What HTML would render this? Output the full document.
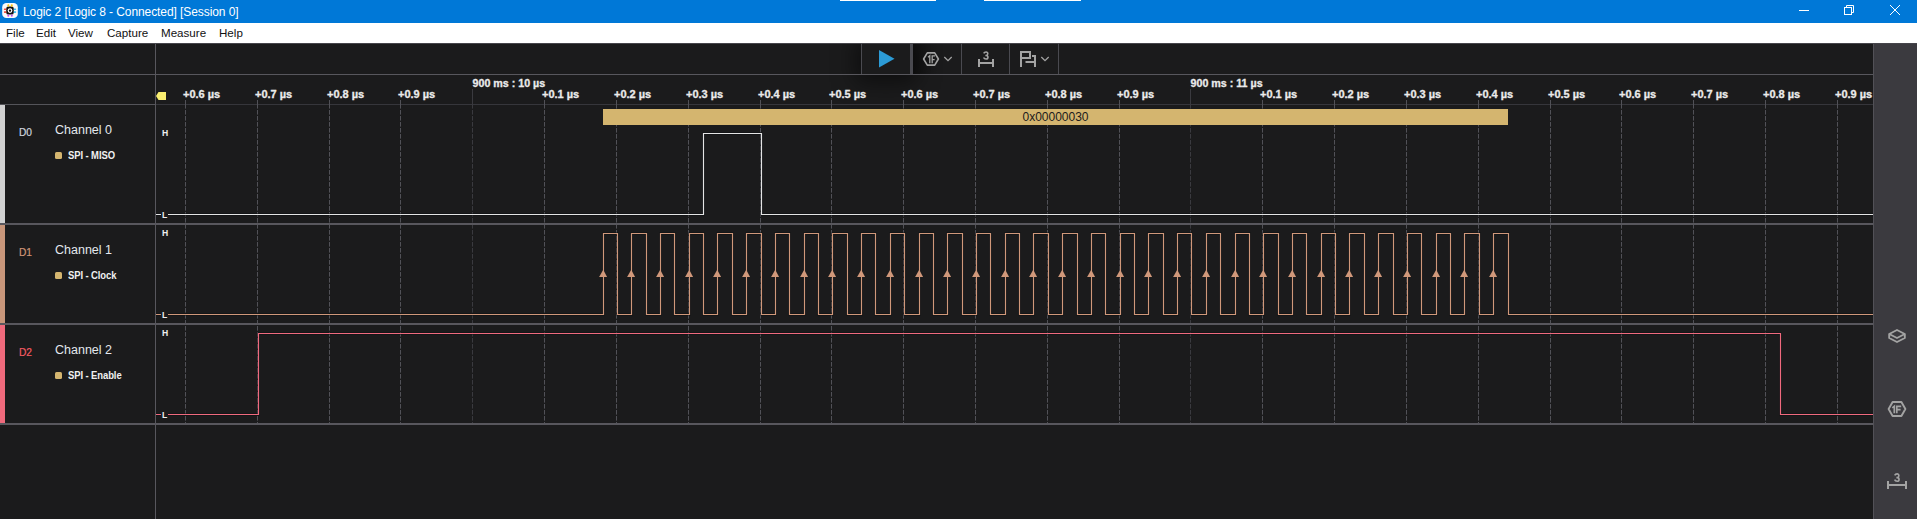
<!DOCTYPE html>
<html><head><meta charset="utf-8"><style>
*{margin:0;padding:0;box-sizing:border-box}
html,body{width:1917px;height:519px;overflow:hidden;background:#1b1b1c;font-family:"Liberation Sans",sans-serif}
.abs{position:absolute}
#title{position:absolute;left:0;top:0;width:1917px;height:23px;background:#0078d7}
#title .t{position:absolute;left:23px;top:5px;color:#fff;font-size:12px;line-height:14px;letter-spacing:-0.08px;white-space:nowrap}
#menu{position:absolute;left:0;top:23px;width:1917px;height:20px;background:#fff}
#menu span{position:absolute;top:3.3px;font-size:11.6px;line-height:14px;color:#111}
#sidebar{position:absolute;left:1873px;top:43px;width:44px;height:476px;background:#3b3a3f;border-left:1px solid #525157}
.vline{position:absolute;left:155px;top:43px;width:1px;height:476px;background:#58575d}
.hline{position:absolute;left:0;width:1873px;height:1px;background:#58575d}
.sep{position:absolute;left:0;width:1873px;height:2px;background:#58575d}
.rl{position:absolute;top:88px;font-size:11px;font-weight:bold;color:#ebebeb;line-height:12px;white-space:nowrap;-webkit-text-stroke:0.3px #ebebeb}
.rm{position:absolute;top:76.5px;font-size:10.7px;font-weight:bold;color:#ebebeb;line-height:12px;white-space:nowrap;-webkit-text-stroke:0.3px #ebebeb}
.cbar{position:absolute;left:0;width:5px}
.dlab{position:absolute;left:19px;font-size:10.2px;line-height:11px;letter-spacing:-0.1px;-webkit-text-stroke:0.2px currentColor}
.cname{position:absolute;left:55px;font-size:12.5px;line-height:14px;color:#e4e8ee}
.sq{position:absolute;left:55px;width:7px;height:7px;border-radius:1.5px;background:#d4b56f}
.an{position:absolute;left:68px;font-size:10.4px;font-weight:bold;line-height:12px;color:#f0f0f0;letter-spacing:-0.1px;white-space:nowrap;transform:scaleX(0.91);transform-origin:0 0}
.hl{position:absolute;left:161px;font-size:8.6px;font-weight:bold;line-height:9px;color:#eee;background:#1b1b1c;padding:0 0.5px 0 1px}
.tsep{position:absolute;top:43px;width:1px;height:31px;background:#4a4a50}
</style></head><body>
<div id="title">
 <svg class="abs" style="left:0;top:0" width="24" height="23" viewBox="0 0 24 23">
  <rect x="2.2" y="3.1" width="15.6" height="15" rx="4.2" fill="#fafafa"/>
  <rect x="6.2" y="6.6" width="7.6" height="8" rx="2.2" fill="#111"/>
  <circle cx="10" cy="10.6" r="1.8" fill="none" stroke="#fff" stroke-width="1.2"/>
  <rect x="7.3" y="4.2" width="2" height="2.6" rx="1" fill="#f5c518"/><rect x="10.8" y="4.2" width="2" height="2.6" rx="1" fill="#f5c518"/>
  <rect x="3.8" y="8.4" width="2.6" height="1.6" rx="0.8" fill="#f04030"/><rect x="3.8" y="11.3" width="2.6" height="1.6" rx="0.8" fill="#f04030"/>
  <rect x="13.6" y="8.4" width="2.6" height="1.6" rx="0.8" fill="#30b8f0"/><rect x="13.6" y="11.3" width="2.6" height="1.6" rx="0.8" fill="#30b8f0"/>
  <rect x="7.3" y="14.4" width="2" height="2.4" rx="1" fill="#c050f0"/><rect x="10.8" y="14.4" width="2" height="2.4" rx="1" fill="#c050f0"/>
 </svg>
 <div class="t">Logic 2 [Logic 8 - Connected] [Session 0]</div>
 <div class="abs" style="left:840px;top:0;width:96px;height:1px;background:#fff"></div>
 <div class="abs" style="left:984px;top:0;width:97px;height:1px;background:#fff"></div>
 <svg class="abs" style="left:1790px;top:0" width="127" height="23" viewBox="1790 0 127 23">
  <line x1="1799" y1="10.5" x2="1809" y2="10.5" stroke="#fff" stroke-width="1"/>
  <rect x="1844.5" y="7.5" width="7" height="7" fill="none" stroke="#fff" stroke-width="1"/>
  <path d="M1846.5,7.5 V5.5 H1853.5 V12.5 H1851.5" fill="none" stroke="#fff" stroke-width="1"/>
  <path d="M1890,5 L1900,15 M1900,5 L1890,15" stroke="#fff" stroke-width="1"/>
 </svg>
</div>
<div id="menu">
 <span style="left:6px">File</span><span style="left:36px">Edit</span><span style="left:68px">View</span><span style="left:107px">Capture</span><span style="left:161px">Measure</span><span style="left:219px">Help</span>
</div>
<div id="sidebar"></div>
<div class="abs" style="left:0;top:43px;width:1873px;height:476px;overflow:hidden"><div class="abs" style="left:862px;top:0;width:48px;height:31px;background:#1b1b1c;box-shadow:0 2px 22px 6px rgba(0,0,0,0.5)"></div></div>
<div class="abs" style="left:913px;top:43px;width:145px;height:31px;background:linear-gradient(90deg,rgba(0,0,0,0.35),rgba(0,0,0,0) 25px)"></div>
<div class="hline" style="top:74px"></div>
<div class="hline" style="top:104px;width:155px;background:#55555a"></div><div class="hline" style="top:104px;left:156px;width:1717px;background:#36363b"></div>
<div class="vline"></div>
<div class="abs" style="left:0;top:43px;width:1917px;height:1px;background:#46454b"></div>
<div class="tsep" style="left:861px"></div>
<div class="abs" style="left:910px;top:43px;width:3px;height:31px;background:#4a4a50"></div>
<div class="tsep" style="left:961px"></div>
<div class="tsep" style="left:1009px"></div>
<div class="tsep" style="left:1058px"></div>
<svg class="abs" style="left:860px;top:43px" width="200" height="31" viewBox="860 43 200 31">
 <path d="M879,50 L894.5,58.8 L879,67.5 Z" fill="#2c9bd6"/>
 <path d="M927.3,52.9 H934.7 L938.4,59 L934.7,65.1 H927.3 L923.6,59 Z" fill="none" stroke="#a3a3a3" stroke-width="1.6" stroke-linejoin="round"/>
 <path d="M928,57.2 L929.8,55.7 V63.3 M932.2,63.3 V55.8 H935 M932.2,59.6 H934.6" fill="none" stroke="#a3a3a3" stroke-width="1.3"/>
 <path d="M944.3,57 L948,60.6 L951.7,57" fill="none" stroke="#a3a3a3" stroke-width="1.3"/>
 <path d="M983.70,53.40 C984.40,52.00 985.75,52.00 986.05,52.00 C988.40,52.00 988.30,55.30 986.05,55.50 H985.35 M986.05,55.50 C988.60,55.50 988.60,59.00 986.05,59.00 C985.25,59.00 984.17,58.80 983.60,57.46" fill="none" stroke="#a3a3a3" stroke-width="1.6" stroke-linecap="butt"/>
 <path d="M979,59 V67 M993,59 V67 M979,63 H993" fill="none" stroke="#a3a3a3" stroke-width="2"/>
 <path d="M1021,67 V52 H1030 V58 H1021" fill="none" stroke="#a3a3a3" stroke-width="2"/>
 <path d="M1032,56 H1035 V67 M1025.5,62 H1035" fill="none" stroke="#a3a3a3" stroke-width="2"/>
 <path d="M1041.3,57 L1045,60.6 L1048.7,57" fill="none" stroke="#a3a3a3" stroke-width="1.3"/>
</svg>
<svg class="abs" style="left:156px;top:90px" width="12" height="12" viewBox="156 90 12 12">
 <path d="M156,96 L158.5,92 H166 V100 H158.5 Z" fill="#f9ee70"/>
</svg>
<div class="rl" style="left:183px">+0.6 µs</div><div class="rl" style="left:255px">+0.7 µs</div><div class="rl" style="left:327px">+0.8 µs</div><div class="rl" style="left:398px">+0.9 µs</div><div class="rl" style="left:542px">+0.1 µs</div><div class="rl" style="left:614px">+0.2 µs</div><div class="rl" style="left:686px">+0.3 µs</div><div class="rl" style="left:758px">+0.4 µs</div><div class="rl" style="left:829px">+0.5 µs</div><div class="rl" style="left:901px">+0.6 µs</div><div class="rl" style="left:973px">+0.7 µs</div><div class="rl" style="left:1045px">+0.8 µs</div><div class="rl" style="left:1117px">+0.9 µs</div><div class="rl" style="left:1260px">+0.1 µs</div><div class="rl" style="left:1332px">+0.2 µs</div><div class="rl" style="left:1404px">+0.3 µs</div><div class="rl" style="left:1476px">+0.4 µs</div><div class="rl" style="left:1548px">+0.5 µs</div><div class="rl" style="left:1619px">+0.6 µs</div><div class="rl" style="left:1691px">+0.7 µs</div><div class="rl" style="left:1763px">+0.8 µs</div><div class="rl" style="left:1835px">+0.9 µs</div>
<div class="rm" style="left:472.5px">900 ms : 10 µs</div><div class="rm" style="left:1190.5px">900 ms : 11 µs</div>
<svg class="abs" style="left:0;top:0" width="1873" height="519" viewBox="0 0 1873 519">
<line x1="185.5" y1="100" x2="185.5" y2="104" stroke="#515157" stroke-width="1"/>
<line x1="185.5" y1="104" x2="185.5" y2="423" stroke="#515157" stroke-width="1" stroke-dasharray="4.6 1.4"/>
<line x1="257.5" y1="100" x2="257.5" y2="104" stroke="#515157" stroke-width="1"/>
<line x1="257.5" y1="104" x2="257.5" y2="423" stroke="#515157" stroke-width="1" stroke-dasharray="4.6 1.4"/>
<line x1="329.5" y1="100" x2="329.5" y2="104" stroke="#515157" stroke-width="1"/>
<line x1="329.5" y1="104" x2="329.5" y2="423" stroke="#515157" stroke-width="1" stroke-dasharray="4.6 1.4"/>
<line x1="400.5" y1="100" x2="400.5" y2="104" stroke="#515157" stroke-width="1"/>
<line x1="400.5" y1="104" x2="400.5" y2="423" stroke="#515157" stroke-width="1" stroke-dasharray="4.6 1.4"/>
<line x1="472.5" y1="89" x2="472.5" y2="104" stroke="#3a3a3f" stroke-width="1"/>
<line x1="472.5" y1="104" x2="472.5" y2="423" stroke="#3a3a3f" stroke-width="1" stroke-dasharray="4.6 1.4"/>
<line x1="544.5" y1="100" x2="544.5" y2="104" stroke="#515157" stroke-width="1"/>
<line x1="544.5" y1="104" x2="544.5" y2="423" stroke="#515157" stroke-width="1" stroke-dasharray="4.6 1.4"/>
<line x1="616.5" y1="100" x2="616.5" y2="104" stroke="#515157" stroke-width="1"/>
<line x1="616.5" y1="104" x2="616.5" y2="423" stroke="#515157" stroke-width="1" stroke-dasharray="4.6 1.4"/>
<line x1="688.5" y1="100" x2="688.5" y2="104" stroke="#515157" stroke-width="1"/>
<line x1="688.5" y1="104" x2="688.5" y2="423" stroke="#515157" stroke-width="1" stroke-dasharray="4.6 1.4"/>
<line x1="760.5" y1="100" x2="760.5" y2="104" stroke="#515157" stroke-width="1"/>
<line x1="760.5" y1="104" x2="760.5" y2="423" stroke="#515157" stroke-width="1" stroke-dasharray="4.6 1.4"/>
<line x1="831.5" y1="100" x2="831.5" y2="104" stroke="#515157" stroke-width="1"/>
<line x1="831.5" y1="104" x2="831.5" y2="423" stroke="#515157" stroke-width="1" stroke-dasharray="4.6 1.4"/>
<line x1="903.5" y1="100" x2="903.5" y2="104" stroke="#515157" stroke-width="1"/>
<line x1="903.5" y1="104" x2="903.5" y2="423" stroke="#515157" stroke-width="1" stroke-dasharray="4.6 1.4"/>
<line x1="975.5" y1="100" x2="975.5" y2="104" stroke="#515157" stroke-width="1"/>
<line x1="975.5" y1="104" x2="975.5" y2="423" stroke="#515157" stroke-width="1" stroke-dasharray="4.6 1.4"/>
<line x1="1047.5" y1="100" x2="1047.5" y2="104" stroke="#515157" stroke-width="1"/>
<line x1="1047.5" y1="104" x2="1047.5" y2="423" stroke="#515157" stroke-width="1" stroke-dasharray="4.6 1.4"/>
<line x1="1119.5" y1="100" x2="1119.5" y2="104" stroke="#515157" stroke-width="1"/>
<line x1="1119.5" y1="104" x2="1119.5" y2="423" stroke="#515157" stroke-width="1" stroke-dasharray="4.6 1.4"/>
<line x1="1190.5" y1="89" x2="1190.5" y2="104" stroke="#3a3a3f" stroke-width="1"/>
<line x1="1190.5" y1="104" x2="1190.5" y2="423" stroke="#3a3a3f" stroke-width="1" stroke-dasharray="4.6 1.4"/>
<line x1="1262.5" y1="100" x2="1262.5" y2="104" stroke="#515157" stroke-width="1"/>
<line x1="1262.5" y1="104" x2="1262.5" y2="423" stroke="#515157" stroke-width="1" stroke-dasharray="4.6 1.4"/>
<line x1="1334.5" y1="100" x2="1334.5" y2="104" stroke="#515157" stroke-width="1"/>
<line x1="1334.5" y1="104" x2="1334.5" y2="423" stroke="#515157" stroke-width="1" stroke-dasharray="4.6 1.4"/>
<line x1="1406.5" y1="100" x2="1406.5" y2="104" stroke="#515157" stroke-width="1"/>
<line x1="1406.5" y1="104" x2="1406.5" y2="423" stroke="#515157" stroke-width="1" stroke-dasharray="4.6 1.4"/>
<line x1="1478.5" y1="100" x2="1478.5" y2="104" stroke="#515157" stroke-width="1"/>
<line x1="1478.5" y1="104" x2="1478.5" y2="423" stroke="#515157" stroke-width="1" stroke-dasharray="4.6 1.4"/>
<line x1="1550.5" y1="100" x2="1550.5" y2="104" stroke="#515157" stroke-width="1"/>
<line x1="1550.5" y1="104" x2="1550.5" y2="423" stroke="#515157" stroke-width="1" stroke-dasharray="4.6 1.4"/>
<line x1="1621.5" y1="100" x2="1621.5" y2="104" stroke="#515157" stroke-width="1"/>
<line x1="1621.5" y1="104" x2="1621.5" y2="423" stroke="#515157" stroke-width="1" stroke-dasharray="4.6 1.4"/>
<line x1="1693.5" y1="100" x2="1693.5" y2="104" stroke="#515157" stroke-width="1"/>
<line x1="1693.5" y1="104" x2="1693.5" y2="423" stroke="#515157" stroke-width="1" stroke-dasharray="4.6 1.4"/>
<line x1="1765.5" y1="100" x2="1765.5" y2="104" stroke="#515157" stroke-width="1"/>
<line x1="1765.5" y1="104" x2="1765.5" y2="423" stroke="#515157" stroke-width="1" stroke-dasharray="4.6 1.4"/>
<line x1="1837.5" y1="100" x2="1837.5" y2="104" stroke="#515157" stroke-width="1"/>
<line x1="1837.5" y1="104" x2="1837.5" y2="423" stroke="#515157" stroke-width="1" stroke-dasharray="4.6 1.4"/>
<rect x="603" y="109" width="905" height="16" fill="#d4b56f"/>
<text x="1055.5" y="121" text-anchor="middle" font-family="Liberation Sans" font-size="12" fill="#1b1b1c">0x00000030</text>
<path d="M156,214.5 H703.5 V133.5 H761.5 V214.5 H1873" fill="none" stroke="#0d1112" stroke-opacity="0.6" stroke-width="2.3"/>
<path d="M156,214.5 H703.5 V133.5 H761.5 V214.5 H1873" fill="none" stroke="#e4e4e4" stroke-width="1.15"/>
<path d="M156,314.5 H603.5 V233.5 H617.5 V314.5 H631.5 V233.5 H646.5 V314.5 H660.5 V233.5 H674.5 V314.5 H689.5 V233.5 H703.5 V314.5 H717.5 V233.5 H732.5 V314.5 H746.5 V233.5 H761.5 V314.5 H775.5 V233.5 H789.5 V314.5 H804.5 V233.5 H818.5 V314.5 H832.5 V233.5 H847.5 V314.5 H861.5 V233.5 H875.5 V314.5 H890.5 V233.5 H904.5 V314.5 H919.5 V233.5 H933.5 V314.5 H947.5 V233.5 H962.5 V314.5 H976.5 V233.5 H990.5 V314.5 H1005.5 V233.5 H1019.5 V314.5 H1033.5 V233.5 H1048.5 V314.5 H1062.5 V233.5 H1077.5 V314.5 H1091.5 V233.5 H1105.5 V314.5 H1120.5 V233.5 H1134.5 V314.5 H1148.5 V233.5 H1163.5 V314.5 H1177.5 V233.5 H1191.5 V314.5 H1206.5 V233.5 H1220.5 V314.5 H1235.5 V233.5 H1249.5 V314.5 H1263.5 V233.5 H1278.5 V314.5 H1292.5 V233.5 H1306.5 V314.5 H1321.5 V233.5 H1335.5 V314.5 H1349.5 V233.5 H1364.5 V314.5 H1378.5 V233.5 H1393.5 V314.5 H1407.5 V233.5 H1421.5 V314.5 H1436.5 V233.5 H1450.5 V314.5 H1464.5 V233.5 H1479.5 V314.5 H1493.5 V233.5 H1508.5 V314.5 H1873" fill="none" stroke="#0d1112" stroke-opacity="0.6" stroke-width="2.3"/>
<path d="M156,314.5 H603.5 V233.5 H617.5 V314.5 H631.5 V233.5 H646.5 V314.5 H660.5 V233.5 H674.5 V314.5 H689.5 V233.5 H703.5 V314.5 H717.5 V233.5 H732.5 V314.5 H746.5 V233.5 H761.5 V314.5 H775.5 V233.5 H789.5 V314.5 H804.5 V233.5 H818.5 V314.5 H832.5 V233.5 H847.5 V314.5 H861.5 V233.5 H875.5 V314.5 H890.5 V233.5 H904.5 V314.5 H919.5 V233.5 H933.5 V314.5 H947.5 V233.5 H962.5 V314.5 H976.5 V233.5 H990.5 V314.5 H1005.5 V233.5 H1019.5 V314.5 H1033.5 V233.5 H1048.5 V314.5 H1062.5 V233.5 H1077.5 V314.5 H1091.5 V233.5 H1105.5 V314.5 H1120.5 V233.5 H1134.5 V314.5 H1148.5 V233.5 H1163.5 V314.5 H1177.5 V233.5 H1191.5 V314.5 H1206.5 V233.5 H1220.5 V314.5 H1235.5 V233.5 H1249.5 V314.5 H1263.5 V233.5 H1278.5 V314.5 H1292.5 V233.5 H1306.5 V314.5 H1321.5 V233.5 H1335.5 V314.5 H1349.5 V233.5 H1364.5 V314.5 H1378.5 V233.5 H1393.5 V314.5 H1407.5 V233.5 H1421.5 V314.5 H1436.5 V233.5 H1450.5 V314.5 H1464.5 V233.5 H1479.5 V314.5 H1493.5 V233.5 H1508.5 V314.5 H1873" fill="none" stroke="#d0987a" stroke-width="1.15"/>
<path d="M599.1,277 L603.2,269.8 L607.1,277 Z" fill="#d0987a"/>
<path d="M627.1,277 L631.2,269.8 L635.1,277 Z" fill="#d0987a"/>
<path d="M656.1,277 L660.2,269.8 L664.1,277 Z" fill="#d0987a"/>
<path d="M685.1,277 L689.2,269.8 L693.1,277 Z" fill="#d0987a"/>
<path d="M713.1,277 L717.2,269.8 L721.1,277 Z" fill="#d0987a"/>
<path d="M742.1,277 L746.2,269.8 L750.1,277 Z" fill="#d0987a"/>
<path d="M771.1,277 L775.2,269.8 L779.1,277 Z" fill="#d0987a"/>
<path d="M800.1,277 L804.2,269.8 L808.1,277 Z" fill="#d0987a"/>
<path d="M828.1,277 L832.2,269.8 L836.1,277 Z" fill="#d0987a"/>
<path d="M857.1,277 L861.2,269.8 L865.1,277 Z" fill="#d0987a"/>
<path d="M886.1,277 L890.2,269.8 L894.1,277 Z" fill="#d0987a"/>
<path d="M915.1,277 L919.2,269.8 L923.1,277 Z" fill="#d0987a"/>
<path d="M943.1,277 L947.2,269.8 L951.1,277 Z" fill="#d0987a"/>
<path d="M972.1,277 L976.2,269.8 L980.1,277 Z" fill="#d0987a"/>
<path d="M1001.1,277 L1005.2,269.8 L1009.1,277 Z" fill="#d0987a"/>
<path d="M1029.1,277 L1033.2,269.8 L1037.1,277 Z" fill="#d0987a"/>
<path d="M1058.1,277 L1062.2,269.8 L1066.1,277 Z" fill="#d0987a"/>
<path d="M1087.1,277 L1091.2,269.8 L1095.1,277 Z" fill="#d0987a"/>
<path d="M1116.1,277 L1120.2,269.8 L1124.1,277 Z" fill="#d0987a"/>
<path d="M1144.1,277 L1148.2,269.8 L1152.1,277 Z" fill="#d0987a"/>
<path d="M1173.1,277 L1177.2,269.8 L1181.1,277 Z" fill="#d0987a"/>
<path d="M1202.1,277 L1206.2,269.8 L1210.1,277 Z" fill="#d0987a"/>
<path d="M1231.1,277 L1235.2,269.8 L1239.1,277 Z" fill="#d0987a"/>
<path d="M1259.1,277 L1263.2,269.8 L1267.1,277 Z" fill="#d0987a"/>
<path d="M1288.1,277 L1292.2,269.8 L1296.1,277 Z" fill="#d0987a"/>
<path d="M1317.1,277 L1321.2,269.8 L1325.1,277 Z" fill="#d0987a"/>
<path d="M1345.1,277 L1349.2,269.8 L1353.1,277 Z" fill="#d0987a"/>
<path d="M1374.1,277 L1378.2,269.8 L1382.1,277 Z" fill="#d0987a"/>
<path d="M1403.1,277 L1407.2,269.8 L1411.1,277 Z" fill="#d0987a"/>
<path d="M1432.1,277 L1436.2,269.8 L1440.1,277 Z" fill="#d0987a"/>
<path d="M1460.1,277 L1464.2,269.8 L1468.1,277 Z" fill="#d0987a"/>
<path d="M1489.1,277 L1493.2,269.8 L1497.1,277 Z" fill="#d0987a"/>
<path d="M156,414.5 H258.5 V333.5 H1780.5 V414.5 H1873" fill="none" stroke="#0d1112" stroke-opacity="0.6" stroke-width="2.3"/>
<path d="M156,414.5 H258.5 V333.5 H1780.5 V414.5 H1873" fill="none" stroke="#f06a7e" stroke-width="1.15"/>
</svg>
<div class="cbar" style="top:105px;height:118px;background:#d2d2d2"></div>
<div class="dlab" style="top:126.8px;color:#cdd5de">D0</div>
<div class="cname" style="top:123px">Channel 0</div>
<div class="sq" style="top:152px"></div>
<div class="an" style="top:150px">SPI - MISO</div>
<div class="sep" style="top:223px"></div>
<div class="hl" style="top:129px">H</div>
<div class="hl" style="top:211px">L</div><div class="cbar" style="top:225px;height:98px;background:#c8967a"></div>
<div class="dlab" style="top:246.8px;color:#cf9576">D1</div>
<div class="cname" style="top:243px">Channel 1</div>
<div class="sq" style="top:272px"></div>
<div class="an" style="top:270px">SPI - Clock</div>
<div class="sep" style="top:323px"></div>
<div class="hl" style="top:229px">H</div>
<div class="hl" style="top:311px">L</div><div class="cbar" style="top:325px;height:98px;background:#f06a7c"></div>
<div class="dlab" style="top:346.8px;color:#f45a62">D2</div>
<div class="cname" style="top:343px">Channel 2</div>
<div class="sq" style="top:372px"></div>
<div class="an" style="top:370px">SPI - Enable</div>
<div class="sep" style="top:423px"></div>
<div class="hl" style="top:329px">H</div>
<div class="hl" style="top:411px">L</div>
<svg class="abs" style="left:1874px;top:43px" width="43" height="476" viewBox="1874 43 43 476">
 <path d="M1889.2,334 L1897,330 L1904.8,334 V338 L1897,342 L1889.2,338 Z" fill="none" stroke="#a3a3a3" stroke-width="1.9" stroke-linejoin="round"/>
 <path d="M1889.2,334 L1897,338 L1904.8,334" fill="none" stroke="#a3a3a3" stroke-width="1.9" stroke-linejoin="round"/>
 <path d="M1892.6,402 H1901.4 L1905.4,409 L1901.4,416 H1892.6 L1888.6,409 Z" fill="none" stroke="#a3a3a3" stroke-width="1.9" stroke-linejoin="round"/>
 <path d="M1892.3,407.8 L1894.3,406.2 V413.2 M1896.8,413.2 V406.3 H1901.2 M1896.8,409.6 H1900.6" fill="none" stroke="#a3a3a3" stroke-width="1.7"/>
 <path d="M1894.70,475.38 C1895.42,473.90 1896.80,473.90 1897.10,473.90 C1899.50,473.90 1899.40,477.40 1897.10,477.60 H1896.40 M1897.10,477.60 C1899.70,477.60 1899.70,481.30 1897.10,481.30 C1896.30,481.30 1895.18,481.10 1894.60,479.67" fill="none" stroke="#a3a3a3" stroke-width="1.6" stroke-linecap="butt"/>
 <path d="M1888,481 V489 M1906,481 V489 M1888,485 H1906" fill="none" stroke="#a3a3a3" stroke-width="2"/>
</svg>
</body></html>
